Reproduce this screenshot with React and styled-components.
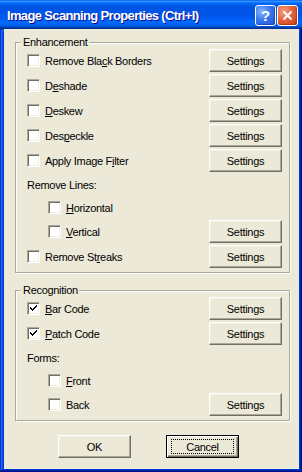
import React from "react";
import styled, { createGlobalStyle } from "styled-components";

const GlobalStyle = createGlobalStyle`
  html, body {
    margin: 0;
    padding: 0;
    background: #ffffff;
  }
  body {
    font-family: "Liberation Sans", Arial, sans-serif;
    font-size: 11px;
    letter-spacing: -0.3px;
    color: #000;
  }
`;

const Window = styled.div`
  width: 302px;
  height: 472px;
  display: flex;
  flex-direction: column;
  overflow: hidden;
`;

const TitleBar = styled.div`
  height: 29px;
  flex: none;
  display: flex;
  align-items: center;
  padding: 1px 4px 0 7px;
  box-sizing: border-box;
  background: linear-gradient(
    to bottom,
    #0058ee 0%,
    #3593ff 4%,
    #288eff 6%,
    #127dff 8%,
    #036ffc 10%,
    #0262ee 14%,
    #0057e5 20%,
    #0054e3 24%,
    #0055eb 56%,
    #005bf5 66%,
    #026afe 76%,
    #0062ef 86%,
    #0052d6 92%,
    #0040ab 94%,
    #003092 100%
  );
`;

const Title = styled.div`
  flex: 1;
  color: #fff;
  font-family: "Liberation Sans", Arial, sans-serif;
  font-weight: bold;
  font-size: 13px;
  letter-spacing: -0.65px;
  text-shadow: 1px 1px 0 #0f1089;
  white-space: nowrap;
`;

const CaptionButton = styled.div`
  width: 21px;
  height: 21px;
  box-sizing: border-box;
  border: 1px solid #fff;
  border-radius: 3px;
  display: flex;
  align-items: center;
  justify-content: center;
  color: #fff;
  font-weight: bold;
  font-size: 15px;
  letter-spacing: 0;
  margin-left: ${(p) => (p.$close ? "1px" : "0")};
  background: ${(p) =>
    p.$close
      ? "radial-gradient(circle at 30% 30%, #f0a287 0%, #e4653c 45%, #cc3a12 100%)"
      : "radial-gradient(circle at 30% 30%, #8cb6fb 0%, #3a78f0 45%, #1b55d8 100%)"};
  box-shadow: inset -1px -1px 1px rgba(0, 0, 0, 0.25);
`;

const Frame = styled.div`
  flex: 1;
  display: flex;
  padding: 0 3px 3px 4px;
  background: #0831d9;
  box-shadow: inset -1px -1px #00138c, inset 1px 1px #0831d9,
    inset -2px -2px #001ea0, inset 2px 2px #166aee, inset -3px -3px #003bda,
    inset 3px 3px #0855dd;
`;

const Body = styled.div`
  flex: 1;
  background: #ece9d8;
  padding: 7px 9px 0 11px;
  display: flex;
  flex-direction: column;
`;

const Group = styled.fieldset`
  margin: ${(p) => (p.$spaced ? "11px 0 0" : "0")};
  padding: 0 7px 4px 11px;
  border: 1px solid #aca899;
  box-shadow: 1px 1px 0 #fff, inset 1px 1px 0 #fff;
  min-inline-size: 0;
`;

const Legend = styled.legend`
  margin-left: -6px;
  padding: 0 1px 0 2px;
  line-height: 13px;
  background: #ece9d8;
`;

const Rows = styled.div`
  display: flex;
  flex-direction: column;
  gap: 2px;
`;

const Row = styled.div`
  display: flex;
  align-items: center;
  height: ${(p) => (p.$tall ? "23px" : "21px")};
  padding-left: ${(p) => (p.$indent ? "21px" : "0")};
`;

const CheckLabel = styled.label`
  display: flex;
  align-items: center;
  gap: 5px;
  white-space: nowrap;
`;

const Box = styled.span`
  width: 13px;
  height: 13px;
  box-sizing: border-box;
  background: #fff;
  border: 1px solid;
  border-color: #aca899 #fff #fff #aca899;
  box-shadow: inset 1px 1px 0 #716f64, inset -1px -1px 0 #f1efe2;
  display: flex;
  align-items: center;
  justify-content: center;
`;

const Button = styled.div`
  width: 73px;
  height: 23px;
  box-sizing: border-box;
  display: flex;
  align-items: center;
  justify-content: center;
  background: #ece9d8;
  border: 1px solid;
  border-color: #fff #716f64 #716f64 #fff;
  box-shadow: inset -1px -1px 0 #aca899, inset 1px 1px 0 #f1efe2;
  margin-left: ${(p) => (p.$push ? "auto" : "0")};
`;

const DefaultButton = styled(Button)`
  border: 1px solid #000;
  box-shadow: inset 1px 1px 0 #fff, inset -1px -1px 0 #716f64,
    inset -2px -2px 0 #aca899;
`;

const FocusRing = styled.span`
  display: flex;
  align-items: center;
  justify-content: center;
  width: 63px;
  height: 15px;
  box-sizing: border-box;
  border: 1px dotted #000;
`;

const ButtonBar = styled.div`
  display: flex;
  gap: 35px;
  margin-top: 14px;
  padding-left: 43px;
`;

const Check = ({ checked }) => (
  <Box>
    {checked && (
      <svg width="9" height="9" viewBox="0 0 9 9" shapeRendering="crispEdges">
        <path d="M1 3h1v1h1v1h1V4h1V3h1V2h1V1h1v2H7v1H6v1H5v1H4v1H3V6H2V5H1z" fill="#000" />
      </svg>
    )}
  </Box>
);

const CheckRow = ({ label, checked, indent, settings }) => (
  <Row $tall={settings} $indent={indent}>
    <CheckLabel>
      <Check checked={checked} />
      <span>{label}</span>
    </CheckLabel>
    {settings && <Button $push>Settings</Button>}
  </Row>
);

export default function App() {
  return (
    <>
      <GlobalStyle />
      <Window>
        <TitleBar>
          <Title>Image Scanning Properties (Ctrl+I)</Title>
          <CaptionButton>?</CaptionButton>
          <CaptionButton $close>
            <svg width="11" height="11" viewBox="0 0 11 11">
              <path d="M1.5 1.5l8 8M9.5 1.5l-8 8" stroke="#fff" strokeWidth="2" />
            </svg>
          </CaptionButton>
        </TitleBar>
        <Frame>
          <Body>
            <Group>
              <Legend>Enhancement</Legend>
              <Rows>
                <CheckRow settings label={<>Remove Bla<u>c</u>k Borders</>} />
                <CheckRow settings label={<>D<u>e</u>shade</>} />
                <CheckRow settings label={<><u>D</u>eskew</>} />
                <CheckRow settings label={<>Des<u>p</u>eckle</>} />
                <CheckRow settings label={<>Apply Image F<u>i</u>lter</>} />
                <Row>Remove Lines:</Row>
                <CheckRow indent label={<><u>H</u>orizontal</>} />
                <CheckRow indent settings label={<><u>V</u>ertical</>} />
                <CheckRow settings label={<>Remove St<u>r</u>eaks</>} />
              </Rows>
            </Group>
            <Group $spaced>
              <Legend>Recognition</Legend>
              <Rows>
                <CheckRow checked settings label={<><u>B</u>ar Code</>} />
                <CheckRow checked settings label={<><u>P</u>atch Code</>} />
                <Row>Forms:</Row>
                <CheckRow indent label={<><u>F</u>ront</>} />
                <CheckRow indent settings label={<>Back</>} />
              </Rows>
            </Group>
            <ButtonBar>
              <Button>OK</Button>
              <DefaultButton>
                <FocusRing>Cancel</FocusRing>
              </DefaultButton>
            </ButtonBar>
          </Body>
        </Frame>
      </Window>
    </>
  );
}
